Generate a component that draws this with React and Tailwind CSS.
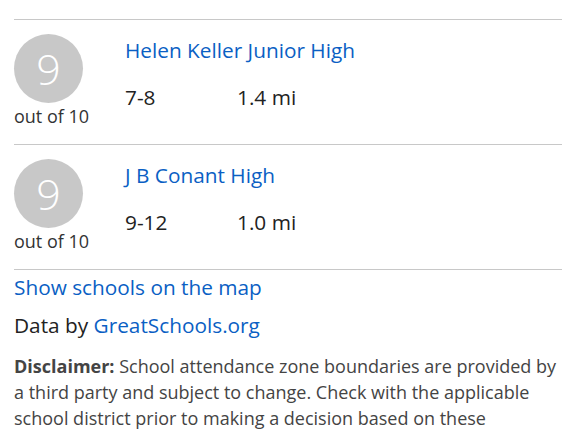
export default function App() {
  const schools = [
    { name: "Helen Keller Junior High", grades: "7-8", dist: "1.4 mi", rating: 9 },
    { name: "J B Conant High", grades: "9-12", dist: "1.0 mi", rating: 9 },
  ];
  return (
    <div className="w-[576px] h-[432px] overflow-hidden bg-white text-[#222] pl-[14px] pr-[14px]" style={{ fontFamily: '"Open Sans", sans-serif' }}>
      <div className="h-[19px]" />
      {schools.map((s) => (
        <div key={s.name} className="border-t border-[#c8c8c8] h-[125px] flex">
          <div className="w-[111px] flex flex-col items-start">
            <div className="w-[69px] h-[69px] mt-[14px] rounded-full bg-[#c8c8c8] flex items-center justify-center text-white text-[43px] font-light leading-none">
              {s.rating}
            </div>
            <div className="text-[18px] leading-[20px] mt-[3px] text-[#333]">out of 10</div>
          </div>
          <div className="flex flex-col">
            <a className="text-[20.8px] leading-[26px] text-[#0b5fc4] mt-[17px]">{s.name}</a>
            <div className="flex text-[20.8px] leading-[26px] text-[#222] mt-[21px]">
              <span className="w-[112px]">{s.grades}</span>
              <span>{s.dist}</span>
            </div>
          </div>
        </div>
      ))}
      <div className="border-t border-[#c8c8c8]">
        <a className="block text-[20.8px] leading-[26px] text-[#0b5fc4] mt-[4px]">Show schools on the map</a>
        <div className="text-[20.8px] leading-[26px] mt-[12px] text-[#222]">
          Data by <a className="text-[#0b5fc4]">GreatSchools.org</a>
        </div>
        <p className="text-[18px] leading-[26px] text-[#444] mt-[15px]">
          <strong className="font-bold">Disclaimer:</strong> School attendance zone boundaries are provided by a third party and subject to change. Check with the applicable school district prior to making a decision based on these boundaries.
        </p>
      </div>
    </div>
  );
}
